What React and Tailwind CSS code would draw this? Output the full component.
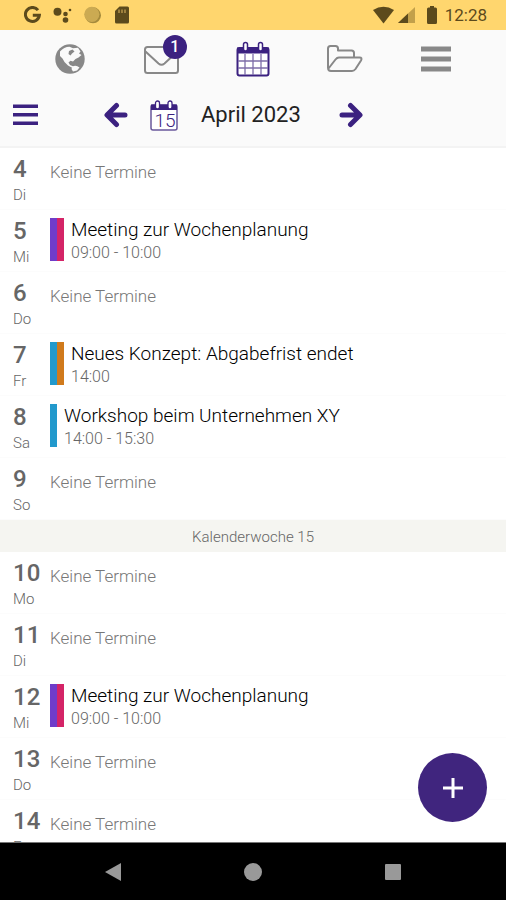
import React from 'react';

const days = [
    { day: 4, name: 'Di' },
    { day: 5, name: 'Mi', title: 'Meeting zur Wochenplanung', time: '09:00 - 10:00', colors: ['bg-[#6f3cc9]', 'bg-[#d42467]'] },
    { day: 6, name: 'Do' },
    { day: 7, name: 'Fr', title: 'Neues Konzept: Abgabefrist endet', time: '14:00', colors: ['bg-[#2299cc]', 'bg-[#d07a1c]'] },
    { day: 8, name: 'Sa', title: 'Workshop beim Unternehmen XY', time: '14:00 - 15:30', colors: ['bg-[#2299cc]'] },
    { day: 9, name: 'So' }
];

const nextDays = [
    { day: 10, name: 'Mo' },
    { day: 11, name: 'Di' },
    { day: 12, name: 'Mi', title: 'Meeting zur Wochenplanung', time: '09:00 - 10:00', colors: ['bg-[#6f3cc9]', 'bg-[#d42467]'] },
    { day: 13, name: 'Do' },
    { day: 14, name: 'Fr' }
];

function StatusBar() {
    return (
        <div className="flex h-[30px] shrink-0 items-center justify-between bg-[#ffd66e] pr-[19px] pl-6 text-[#5c4a1c]">
            <div className="flex items-center gap-3">
                <svg width="17" height="18" viewBox="0 0 17 18" fill="none" stroke="currentColor" strokeWidth="3">
                    <path d="M14 4.2A7 7 0 1 0 15.4 9.2H8.8" />
                </svg>
                <svg width="19" height="18" viewBox="0 0 19 18" fill="currentColor">
                    <circle cx="4.5" cy="5.8" r="4" />
                    <circle cx="12.5" cy="8" r="2.3" />
                    <circle cx="12.5" cy="14" r="2.8" />
                    <circle cx="17" cy="4" r="1.3" />
                </svg>
                <svg width="18" height="18" viewBox="0 0 18 18">
                    <circle cx="9" cy="9.3" r="8" fill="#a58a3c" />
                    <circle cx="7.8" cy="8.3" r="7.6" fill="#cbaa52" />
                </svg>
                <svg width="16" height="18" viewBox="0 0 16 18">
                    <path d="M5.5 0.5H13.5Q15 0.5 15 2V16Q15 17.5 13.5 17.5H2.5Q1 17.5 1 16V5Z" fill="currentColor" />
                    <path d="M5 3.5V7M8 3.5V7M11 3.5V7" stroke="#b3934a" strokeWidth="1.5" />
                </svg>
            </div>
            <div className="flex items-center">
                <svg width="21" height="18" viewBox="0 0 21 18" fill="currentColor">
                    <path d="M0 4Q10.5 -2.5 21 4L10.5 17.5Z" />
                </svg>
                <svg className="ml-1" width="17" height="18" viewBox="0 0 17 18">
                    <path d="M17 1V17H0Z" fill="#c2a04a" />
                    <path d="M10 7.5V17H0Z" fill="currentColor" />
                </svg>
                <svg className="ml-3" width="10" height="18" viewBox="0 0 10 18" fill="currentColor">
                    <path d="M3 0H7V1.5H8.5Q10 1.5 10 3V16.5Q10 18 8.5 18H1.5Q0 18 0 16.5V3Q0 1.5 1.5 1.5H3Z" />
                </svg>
                <span className="ml-2 text-[17px] leading-5">12:28</span>
            </div>
        </div>
    );
}

function GlobeIcon() {
    return (
        <svg width="30" height="30" viewBox="0 0 30 30">
            <circle cx="15" cy="15" r="14.7" fill="#888" />
            <path d="M5 7.500Q9 3 14.500 2.800L18 4.200L23 3.800L25.500 7.500L24 9.500L26.500 11L23.500 13.500L20.500 15L18 17.500L15.500 16.800L13.500 18.500L15 21L18.500 22.500L17.500 24L13 21.500L9.500 18L7.500 14.500L5 12Z" fill="#fafafa" />
            <path d="M14 7L17.500 5.500L19.500 7.500L17 9.500L15.500 11.500L13.500 10Z" fill="#888" />
            <path d="M17.500 22.500Q21 20.500 24.500 23.500L22 26.500L18 27.500L16.500 25Z" fill="#fafafa" />
        </svg>
    );
}

function CalendarIcon() {
    return (
        <svg width="34" height="36" viewBox="0 0 34 36">
            <rect x="1.500" y="7" width="31" height="27.500" rx="2" fill="#fff" stroke="#3b2180" strokeWidth="2" />
            <path d="M1 6.500H33V12.500H1Z" fill="#3b2180" />
            <path d="M9 13V34M17 13V34M25 13V34M2 20H32M2 27H32" stroke="#7d6da8" strokeWidth="1.300" />
            <rect x="7.500" y="1.500" width="4" height="8.500" rx="2" fill="#fff" stroke="#3b2180" strokeWidth="1.500" />
            <rect x="22.500" y="1.500" width="4" height="8.500" rx="2" fill="#fff" stroke="#3b2180" strokeWidth="1.500" />
        </svg>
    );
}

function TodayIcon() {
    return (
        <svg width="28" height="31" viewBox="0 0 28 31">
            <rect x="1" y="5" width="26" height="25" rx="2" fill="#fff" stroke="#6a589c" strokeWidth="1.500" />
            <path d="M1 4.500H27V10H1Z" fill="#3b2180" />
            <rect x="5.500" y="1" width="4" height="8" rx="2" fill="#fff" stroke="#3b2180" strokeWidth="1.300" />
            <rect x="18" y="1" width="4" height="8" rx="2" fill="#fff" stroke="#3b2180" strokeWidth="1.300" />
            <text x="15" y="27" textAnchor="middle" fontSize="19" fontWeight="300" fill="#3b2180">15</text>
        </svg>
    );
}

function Header() {
    return (
        <header className="flex h-[118px] shrink-0 flex-col border-b-2 border-[#f3f3f3] bg-[#fafafa]">
            <nav className="grid h-[58px] grid-cols-5 items-center justify-items-center px-6 text-[#888]">
                <button type="button" aria-label="Web">
                    <GlobeIcon />
                </button>
                <button type="button" aria-label="Nachrichten" className="relative">
                    <svg width="35" height="29" viewBox="0 0 35 29" fill="none" stroke="currentColor" strokeWidth="2">
                        <rect x="1" y="2" width="33" height="26" rx="2.500" />
                        <path d="M1.500 6.500L14.500 18.500Q17.500 21 20.500 18.500L33.500 6.500" />
                    </svg>
                    <span className="absolute -top-2.5 -right-2 flex size-6 items-center justify-center rounded-full bg-[#3b2180] text-base leading-none font-medium text-white">1</span>
                </button>
                <button type="button" aria-label="Kalender">
                    <CalendarIcon />
                </button>
                <button type="button" aria-label="Dateien">
                    <svg width="37" height="30" viewBox="0 0 37 30" fill="none" stroke="currentColor" strokeWidth="2" strokeLinejoin="round">
                        <path d="M2 24V4.500Q2 2 4.500 2H9.500Q12 2 12 4.500V6.500H25.500Q28 6.500 28 9V13.500" />
                        <path d="M2 23.500Q2 27 5 27H26Q28 27 29.500 25L35 16.500Q36.500 13.500 33.500 13.500H13Q11 13.500 9.500 15.500L2.500 24.500" />
                    </svg>
                </button>
                <button type="button" aria-label="Mehr">
                    <svg width="30" height="26" viewBox="0 0 30 26" fill="currentColor">
                        <path d="M0 0.500H30V5.500H0ZM0 10.500H30V15.500H0ZM0 20.500H30V25.500H0Z" />
                    </svg>
                </button>
            </nav>
            <div className="flex h-[54px] items-center pl-[13px] text-[#3b2180]">
                <button type="button" aria-label="Menü">
                    <svg width="25" height="22" viewBox="0 0 25 22" fill="currentColor">
                        <path d="M0 0.500H25V4H0ZM0 9H25V12.500H0ZM0 17.500H25V21H0Z" />
                    </svg>
                </button>
                <button type="button" aria-label="Zurück" className="ml-[65px]">
                    <svg width="25" height="26" viewBox="0 0 25 26" fill="none" stroke="currentColor" strokeWidth="5" strokeLinecap="round" strokeLinejoin="round">
                        <path d="M13.500 3.500L4 13L13.500 22.500M5 13H22" />
                    </svg>
                </button>
                <button type="button" aria-label="Heute" className="ml-[22px]">
                    <TodayIcon />
                </button>
                <h1 className="ml-[23px] text-[22px] leading-7 font-normal text-[#222]">April 2023</h1>
                <button type="button" aria-label="Weiter" className="ml-[38px]">
                    <svg width="25" height="26" viewBox="0 0 25 26" fill="none" stroke="currentColor" strokeWidth="5" strokeLinecap="round" strokeLinejoin="round">
                        <path d="M11.500 3.500L21 13L11.500 22.500M20 13H3" />
                    </svg>
                </button>
            </div>
        </header>
    );
}

function DayRow({ entry }) {
    return (
        <li className="flex h-[62px] border-b border-[#fcfcfc] pl-[13px]">
            <div className="w-[37px] shrink-0 pt-[7px] text-[#666]">
                <div className="text-2xl leading-7 font-medium">{entry.day}</div>
                <div className="text-[15px] leading-6 font-light">{entry.name}</div>
            </div>
            {entry.title ? (
                <div className="flex pt-2">
                    <div className="mr-[7px] flex h-[43px]">
                        {entry.colors.map((color) => (
                            <span key={color} className={`w-[7px] ${color}`} />
                        ))}
                    </div>
                    <div>
                        <div className="text-[19px] leading-6 font-light text-black">{entry.title}</div>
                        <div className="text-base leading-[22px] font-light text-[#666]">{entry.time}</div>
                    </div>
                </div>
            ) : (
                <div className="pt-3 text-[17px] leading-6 font-light text-[#777]">Keine Termine</div>
            )}
        </li>
    );
}

function App() {
    return (
        <div className="flex h-screen flex-col overflow-hidden bg-white font-[Roboto,sans-serif]">
            <StatusBar />
            <Header />
            <main className="relative min-h-0 flex-1 overflow-hidden">
                <ul>
                    {days.map((entry) => <DayRow key={entry.day} entry={entry} />)}
                </ul>
                <h2 className="h-8 bg-[#f5f5f1] text-center text-[15px] leading-[34px] font-light text-[#666]">Kalenderwoche 15</h2>
                <ul>
                    {nextDays.map((entry) => <DayRow key={entry.day} entry={entry} />)}
                </ul>
                <button type="button" aria-label="Termin hinzufügen" className="absolute right-[19px] bottom-5 flex size-[69px] items-center justify-center rounded-full bg-[#40257e]">
                    <svg width="20" height="20" viewBox="0 0 20 20" stroke="#fff" strokeWidth="3">
                        <path d="M10 0V20M0 10H20" />
                    </svg>
                </button>
            </main>
            {/* Android navigation */}
            <div className="grid h-[58px] shrink-0 grid-cols-3 items-center justify-items-center border-t border-[#777] bg-black px-[43px] text-[#999]">
                <button type="button" aria-label="Zurück">
                    <svg width="16" height="18" viewBox="0 0 16 18" fill="currentColor"><path d="M0 9L16 0V18Z" /></svg>
                </button>
                <button type="button" aria-label="Startbildschirm">
                    <svg width="18" height="18" viewBox="0 0 18 18" fill="currentColor"><circle cx="9" cy="9" r="9" /></svg>
                </button>
                <button type="button" aria-label="Übersicht">
                    <svg width="16" height="16" viewBox="0 0 16 16" fill="currentColor"><rect width="16" height="16" rx="1" /></svg>
                </button>
            </div>
        </div>
    );
}

export default App;
